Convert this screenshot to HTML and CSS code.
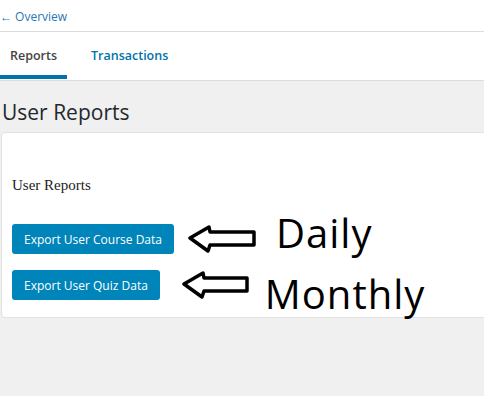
FILE: index.html
```html
<!DOCTYPE html>
<html lang="en">
<head>
    <meta charset="UTF-8">
    <title>User Reports</title>
    <link rel="stylesheet" href="styles.css">
</head>
<body class="body">
    <div class="topnav">
        <a class="back-link" href="#">&larr; Overview</a>
    </div>
    <nav class="tabs">
        <a class="tab active" href="#">Reports</a>
        <a class="tab" href="#">Transactions</a>
    </nav>
    <main class="content">
        <h1 class="page-title">User Reports</h1>
        <div class="card">
            <h2 class="card-title">User Reports</h2>
            <div class="export-row">
                <button class="btn">Export User Course Data</button>
                <svg class="arrow arrow-daily" width="70" height="28" viewBox="0 0 70 28">
                    <polygon points="3,13 22,2 23,7 67,7 67,20 23,20 21,26" fill="none" stroke="#000" stroke-width="3.5" stroke-linejoin="round"/>
                </svg>
                <span class="note note-daily">Daily</span>
            </div>
            <div class="export-row">
                <button class="btn">Export User Quiz Data</button>
                <svg class="arrow arrow-monthly" width="70" height="28" viewBox="0 0 70 28">
                    <polygon points="3,13 22,2 23,7 66,7 66,20 23,20 21,26" fill="none" stroke="#000" stroke-width="3.5" stroke-linejoin="round"/>
                </svg>
                <span class="note note-monthly">Monthly</span>
            </div>
        </div>
    </main>
</body>
</html>
```

FILE: styles.css
```css
.body {
    margin: 0;
    background: #f0f0f0;
    font-family: "Open Sans", "Noto Sans", sans-serif;
    overflow: hidden;
    height: 396px;
}

.topnav {
    background: #fff;
    height: 31px;
    border-bottom: 1px solid #dcdcdc;
    display: flex;
    align-items: center;
}
.back-link {
    color: #2a77b3;
    font-size: 12px;
    text-decoration: none;
    margin-top: 2px;
}

.tabs {
    background: #fff;
    height: 48px;
    border-bottom: 1px solid #dcdcdc;
    display: flex;
    gap: 14px;
}
.tab {
    height: 39px;
    padding: 4px 10px 0 10px;
    display: flex;
    align-items: center;
    font-size: 12.5px;
    font-weight: 600;
    color: #0073aa;
    text-decoration: none;
    border-bottom: 4px solid transparent;
}
.tab.active {
    color: #444;
    border-bottom-color: #0073aa;
    width: 47px;
}

.content {
    padding: 0 0 0 1px;
}
.page-title {
    margin: 19px 0 8px 1px;
    font-size: 21px;
    font-weight: 400;
    color: #23282d;
    line-height: 24px;
}

.card {
    background: #fff;
    border: 1px solid #e2e2e2;
    border-radius: 4px;
    margin-right: -10px;
    height: 184px;
    padding: 0 0 0 10px;
}
.card-title {
    font-family: "Liberation Serif", serif;
    font-weight: 400;
    font-size: 15px;
    color: #222;
    margin: 43px 0 30px 0;
    line-height: 18px;
}

.export-row {
    display: flex;
    align-items: center;
    height: 30px;
    margin-bottom: 16px;
}
.btn {
    background: #0085ba;
    color: #fff;
    border: none;
    border-radius: 3px;
    height: 30px;
    padding: 0 12px;
    font-family: "Open Sans", "Noto Sans", sans-serif;
    font-size: 12px;
}
.arrow-daily {
    margin-left: 13px;
}
.arrow-monthly {
    margin-left: 21px;
}
.note {
    font-family: "Open Sans", sans-serif;
    font-size: 40px;
    letter-spacing: 1px;
    color: #000;
    line-height: 40px;
}
.note-daily {
    margin: -13px 0 0 19px;
}
.note-monthly {
    margin: 17px 0 0 14px;
}
```
